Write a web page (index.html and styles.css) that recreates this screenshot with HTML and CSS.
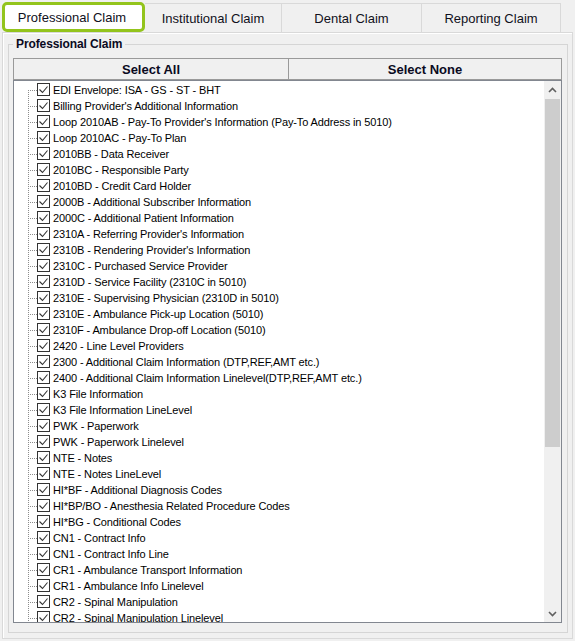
FILE: index.html
```html
<!DOCTYPE html>
<html lang="en">
<head>
<meta charset="utf-8">
<title>Professional Claim</title>
<link rel="stylesheet" href="styles.css">
</head>
<body>
<svg class="defs" width="0" height="0" aria-hidden="true">
  <symbol id="chk" viewBox="0 0 13 13">
    <rect x="0.5" y="0.5" width="12" height="12" fill="#fff" stroke="#333"/>
    <polyline points="2.5,6.5 5.5,9.5 10.5,3.5" fill="none" stroke="#333" stroke-width="1.1"/>
  </symbol>
</svg>
<div class="tabs">
  <div class="tab active">Professional Claim</div>
  <div class="tab t-inst">Institutional Claim</div>
  <div class="tab t-dental">Dental Claim</div>
  <div class="tab t-report">Reporting Claim</div>
</div>
<div class="panel">
  <fieldset class="group">
    <legend>Professional Claim</legend>
    <div class="header">
      <div class="hcell">Select All</div>
      <div class="hcell hsep">Select None</div>
    </div>
    <div class="list">
      <div class="rows">
        <div class="row"><span class="conn"></span><svg class="cb"><use href="#chk"/></svg><span class="txt">EDI Envelope: ISA - GS - ST - BHT</span></div>
        <div class="row"><span class="conn"></span><svg class="cb"><use href="#chk"/></svg><span class="txt">Billing Provider's Additional Information</span></div>
        <div class="row"><span class="conn"></span><svg class="cb"><use href="#chk"/></svg><span class="txt">Loop 2010AB - Pay-To Provider's Information (Pay-To Address in 5010)</span></div>
        <div class="row"><span class="conn"></span><svg class="cb"><use href="#chk"/></svg><span class="txt">Loop 2010AC - Pay-To Plan</span></div>
        <div class="row"><span class="conn"></span><svg class="cb"><use href="#chk"/></svg><span class="txt">2010BB - Data Receiver</span></div>
        <div class="row"><span class="conn"></span><svg class="cb"><use href="#chk"/></svg><span class="txt">2010BC - Responsible Party</span></div>
        <div class="row"><span class="conn"></span><svg class="cb"><use href="#chk"/></svg><span class="txt">2010BD - Credit Card Holder</span></div>
        <div class="row"><span class="conn"></span><svg class="cb"><use href="#chk"/></svg><span class="txt">2000B - Additional Subscriber Information</span></div>
        <div class="row"><span class="conn"></span><svg class="cb"><use href="#chk"/></svg><span class="txt">2000C - Additional Patient Information</span></div>
        <div class="row"><span class="conn"></span><svg class="cb"><use href="#chk"/></svg><span class="txt">2310A - Referring Provider's Information</span></div>
        <div class="row"><span class="conn"></span><svg class="cb"><use href="#chk"/></svg><span class="txt">2310B - Rendering Provider's Information</span></div>
        <div class="row"><span class="conn"></span><svg class="cb"><use href="#chk"/></svg><span class="txt">2310C - Purchased Service Provider</span></div>
        <div class="row"><span class="conn"></span><svg class="cb"><use href="#chk"/></svg><span class="txt">2310D - Service Facility (2310C in 5010)</span></div>
        <div class="row"><span class="conn"></span><svg class="cb"><use href="#chk"/></svg><span class="txt">2310E - Supervising Physician (2310D in 5010)</span></div>
        <div class="row"><span class="conn"></span><svg class="cb"><use href="#chk"/></svg><span class="txt">2310E - Ambulance Pick-up Location (5010)</span></div>
        <div class="row"><span class="conn"></span><svg class="cb"><use href="#chk"/></svg><span class="txt">2310F - Ambulance Drop-off Location (5010)</span></div>
        <div class="row"><span class="conn"></span><svg class="cb"><use href="#chk"/></svg><span class="txt">2420 - Line Level Providers</span></div>
        <div class="row"><span class="conn"></span><svg class="cb"><use href="#chk"/></svg><span class="txt">2300 - Additional Claim Information (DTP,REF,AMT etc.)</span></div>
        <div class="row"><span class="conn"></span><svg class="cb"><use href="#chk"/></svg><span class="txt">2400 - Additional Claim Information Linelevel(DTP,REF,AMT etc.)</span></div>
        <div class="row"><span class="conn"></span><svg class="cb"><use href="#chk"/></svg><span class="txt">K3 File Information</span></div>
        <div class="row"><span class="conn"></span><svg class="cb"><use href="#chk"/></svg><span class="txt">K3 File Information LineLevel</span></div>
        <div class="row"><span class="conn"></span><svg class="cb"><use href="#chk"/></svg><span class="txt">PWK - Paperwork</span></div>
        <div class="row"><span class="conn"></span><svg class="cb"><use href="#chk"/></svg><span class="txt">PWK - Paperwork Linelevel</span></div>
        <div class="row"><span class="conn"></span><svg class="cb"><use href="#chk"/></svg><span class="txt">NTE - Notes</span></div>
        <div class="row"><span class="conn"></span><svg class="cb"><use href="#chk"/></svg><span class="txt">NTE - Notes LineLevel</span></div>
        <div class="row"><span class="conn"></span><svg class="cb"><use href="#chk"/></svg><span class="txt">HI*BF - Additional Diagnosis Codes</span></div>
        <div class="row"><span class="conn"></span><svg class="cb"><use href="#chk"/></svg><span class="txt">HI*BP/BO - Anesthesia Related Procedure Codes</span></div>
        <div class="row"><span class="conn"></span><svg class="cb"><use href="#chk"/></svg><span class="txt">HI*BG - Conditional Codes</span></div>
        <div class="row"><span class="conn"></span><svg class="cb"><use href="#chk"/></svg><span class="txt">CN1 - Contract Info</span></div>
        <div class="row"><span class="conn"></span><svg class="cb"><use href="#chk"/></svg><span class="txt">CN1 - Contract Info Line</span></div>
        <div class="row"><span class="conn"></span><svg class="cb"><use href="#chk"/></svg><span class="txt">CR1 - Ambulance Transport Information</span></div>
        <div class="row"><span class="conn"></span><svg class="cb"><use href="#chk"/></svg><span class="txt">CR1 - Ambulance Info Linelevel</span></div>
        <div class="row"><span class="conn"></span><svg class="cb"><use href="#chk"/></svg><span class="txt">CR2 - Spinal Manipulation</span></div>
        <div class="row"><span class="conn"></span><svg class="cb"><use href="#chk"/></svg><span class="txt">CR2 - Spinal Manipulation Linelevel</span></div>
      </div>
      <div class="scrollbar">
        <div class="sb-btn"><svg width="9" height="6" viewBox="0 0 9 6"><polyline points="1,5 4.5,1.5 8,5" fill="none" stroke="#606060" stroke-width="1.6"/></svg></div>
        <div class="sb-track"><div class="sb-thumb"></div></div>
        <div class="sb-btn"><svg width="9" height="6" viewBox="0 0 9 6"><polyline points="1,1 4.5,4.5 8,1" fill="none" stroke="#606060" stroke-width="1.6"/></svg></div>
      </div>
    </div>
  </fieldset>
</div>
</body>
</html>
```

FILE: styles.css
```css
* { box-sizing: border-box; }

html, body {
  margin: 0;
  padding: 0;
}

body {
  width: 575px;
  height: 641px;
  overflow: hidden;
  background: #f0f0f0;
  font-family: "Liberation Sans", Arial, sans-serif;
  color: #000;
}

.defs {
  position: absolute;
  width: 0;
  height: 0;
}

/* ---------- tabs ---------- */
.tabs {
  display: flex;
  align-items: flex-end;
  height: 30px;
  margin-top: 2px;
  padding-left: 2px;
}

.tab {
  height: 29px;
  display: flex;
  align-items: center;
  justify-content: center;
  font-size: 13px;
  color: #101020;
  background: #f0f0f0;
  border-top: 1px solid #d9d9d9;
  border-right: 1px solid #d9d9d9;
}

.tab.active {
  width: 143px;
  height: 30px;
  background: #fff;
  border: 3px solid #93c41c;
  border-radius: 5px;
  padding-top: 1px;
  padding-right: 3px;
}

.t-inst { width: 137px; }
.t-dental { width: 140px; }
.t-report { width: 139px; }

/* ---------- panel ---------- */
.panel {
  margin-left: 2px;
  width: 571px;
  height: 607px;
  border: 1px solid #d9d9d9;
  box-shadow: inset 1px 1px 0 #fff;
  padding: 4px 4px 5px 5px;
}

.group {
  margin: 0;
  width: 560px;
  min-width: 0;
  border: 1px solid #d5d5d5;
  padding: 7px 5px 9px 4px;
}

.group legend {
  padding: 0 3px;
  font-size: 12px;
  line-height: 14px;
  font-weight: bold;
  color: #0a0a1e;
  letter-spacing: -0.1px;
}

/* ---------- header ---------- */
.header {
  display: grid;
  grid-template-columns: 274px 1fr;
  height: 22px;
  border: 1px solid #9a9a9a;
  background: #f0f0f0;
}

.hcell {
  display: flex;
  align-items: center;
  justify-content: center;
  font-size: 13px;
  font-weight: bold;
  color: #0a0a1e;
}

.hsep {
  border-left: 1px solid #9a9a9a;
}

/* ---------- list ---------- */
.list {
  display: flex;
  height: 543px;
  border: 1px solid #828790;
  background: #fff;
}

.rows {
  flex: 1;
  overflow: hidden;
  padding-top: 1px;
}

.row {
  display: flex;
  align-items: flex-start;
  height: 16px;
  font-size: 11px;
  line-height: 16px;
  letter-spacing: -0.12px;
  white-space: nowrap;
}

.conn {
  flex: none;
  width: 9px;
  height: 16px;
  margin-left: 14px;
  background:
    repeating-linear-gradient(to right, #8c8c8c 0 1px, transparent 1px 2px) 0 8px / 9px 1px no-repeat,
    repeating-linear-gradient(to bottom, #8c8c8c 0 1px, transparent 1px 2px) 0 0 / 1px 16px no-repeat;
}

.row:first-child .conn {
  background:
    repeating-linear-gradient(to right, #8c8c8c 0 1px, transparent 1px 2px) 0 8px / 9px 1px no-repeat,
    repeating-linear-gradient(to bottom, #8c8c8c 0 1px, transparent 1px 2px) 0 8px / 1px 8px no-repeat;
}

.cb {
  flex: none;
  width: 13px;
  height: 13px;
  margin-top: 1px;
}

.txt {
  margin-left: 3px;
}

/* ---------- scrollbar ---------- */
.scrollbar {
  flex: none;
  width: 17px;
  display: flex;
  flex-direction: column;
  background: #f0f0f0;
}

.sb-btn {
  flex: none;
  height: 17px;
  display: flex;
  align-items: center;
  justify-content: center;
}

.sb-track {
  flex: 1;
  padding: 1px 1px 0 1px;
}

.sb-thumb {
  height: 348px;
  background: #cdcdcd;
}
```
